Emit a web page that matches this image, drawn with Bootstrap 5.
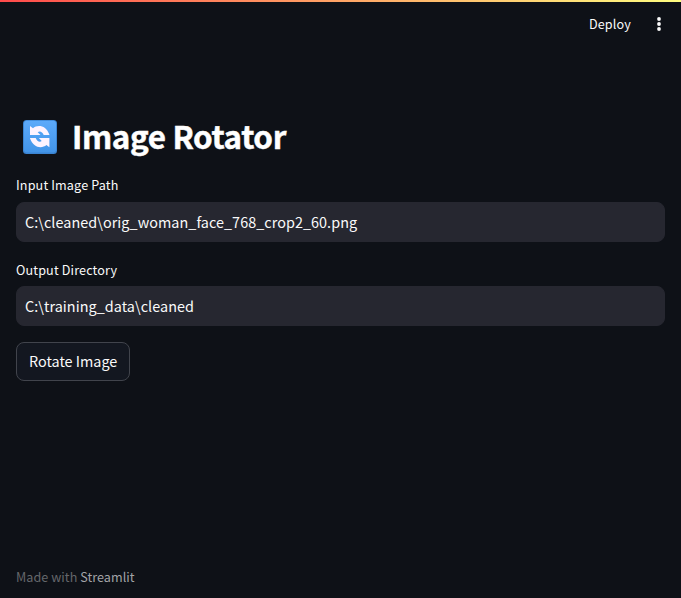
<!DOCTYPE html>
<html lang="en" data-bs-theme="dark">
<head>
<meta charset="utf-8">
<meta name="viewport" content="width=device-width, initial-scale=1">
<title>Image Rotator</title>
<link href="https://cdn.jsdelivr.net/npm/bootstrap@5.3.0/dist/css/bootstrap.min.css" rel="stylesheet">
<style>
body{background:#0e1117;color:#fafafa;font-family:"Noto Sans CJK JP","Noto Sans",sans-serif;font-size:14.4px;line-height:24px;height:598px;overflow:hidden}
.top-line{height:2px;background:linear-gradient(90deg,#ff4b4b,#fffd80)}
.app-header{height:44px;padding:0 15px 0 0}
.deploy{font-size:12.6px;line-height:20px;letter-spacing:.15px;color:#fafafa;border:0;margin-right:21px}
.app-title{font-size:31.4px;line-height:44px;font-weight:700;margin:71px 0 17px 7px}
.title-text{letter-spacing:-.38px;margin:-3px 0 0 14px;-webkit-text-stroke:.5px #fafafa}
.app-label{font-size:12.6px;line-height:20px;letter-spacing:.14px;margin:0 0 7px}
.dst-label{margin:18px 0 6px}
.app-input,.app-input:focus{height:40px;background:#262730;color:#fafafa;border:1px solid #262730;border-radius:8px;padding:0 8px 2px;font-size:14.4px;line-height:24px;letter-spacing:.05px;box-shadow:none}
.app-btn{height:39px;background:#131720;border:1px solid #41444c;border-radius:8px;color:#fafafa;font-size:14.4px;line-height:24px;padding:0 12px 2px}
.app-footer{font-size:12.6px;line-height:20px;letter-spacing:.05px;color:#65676b;padding-bottom:11px}
.app-footer a{color:#a3a4a7}
</style>
<script src="https://cdn.jsdelivr.net/npm/bootstrap@5.3.0/dist/js/bootstrap.bundle.min.js"></script>
</head>
<body class="d-flex flex-column">
<div class="top-line flex-shrink-0"></div>
<header class="app-header d-flex justify-content-end align-items-center flex-shrink-0">
  <button class="deploy btn p-0">Deploy</button>
  <svg width="14" height="16" viewBox="0 0 14 16" fill="#fafafa" aria-hidden="true"><circle cx="7" cy="3" r="1.9"/><circle cx="7" cy="8" r="1.9"/><circle cx="7" cy="13" r="1.9"/></svg>
</header>
<main class="px-3 flex-grow-1">
  <h1 class="app-title d-flex align-items-center">
    <svg class="flex-shrink-0" width="35" height="35" viewBox="0 0 35 35" aria-hidden="true">
      <defs><linearGradient id="tile" x2="0" y2="1"><stop stop-color="#5caafa"/><stop offset="1" stop-color="#4294e8"/></linearGradient></defs>
      <rect width="34" height="34" rx="3.5" fill="#3a84d2"/>
      <rect x="1" y=".8" width="32" height="31.700" rx="3" fill="url(#tile)"/>
      <path fill="#fdf3ff" d="M7 6 10 8.200C14 4.800 23 4.500 26.500 15H20.700C19.500 11.500 16.500 10.500 14.700 12.200L17.500 15H7ZM26.400 27.300 23.400 25C19.400 28.500 10.400 28.700 6.900 18H12.700C13.900 21.500 16.900 22.500 18.700 21L15.900 18H26.400Z"/>
    </svg>
    <span class="title-text">Image Rotator</span>
  </h1>
  <form>
    <label class="app-label d-block" for="src">Input Image Path</label>
    <input class="app-input form-control" id="src" type="text" value="C:\cleaned\orig_woman_face_768_crop2_60.png">
    <label class="app-label dst-label d-block" for="dst">Output Directory</label>
    <input class="app-input form-control" id="dst" type="text" value="C:\training_data\cleaned">
    <button class="app-btn btn mt-3" type="button">Rotate Image</button>
  </form>
</main>
<footer class="app-footer px-3">Made with <a class="text-decoration-none" href="#">Streamlit</a></footer>
</body>
</html>
